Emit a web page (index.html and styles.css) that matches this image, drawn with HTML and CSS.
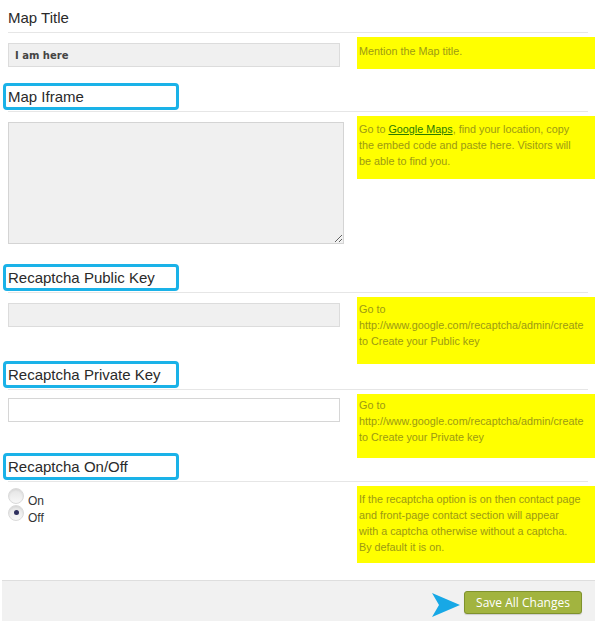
FILE: index.html
```html
<!DOCTYPE html>
<html>
<head>
    <meta charset="UTF-8">
    <title>Contact Options</title>
    <link rel="stylesheet" href="styles.css">
</head>
<body>
    <div class="options">
        <div class="section">
            <div class="section-head">
                <div class="heading">Map Title</div>
            </div>
            <div class="row row-title">
                <div class="field">
                    <input type="text" class="text-input input-muted input-value" value="I am here">
                </div>
                <div class="note note-title">Mention the Map title.</div>
            </div>
        </div>

        <div class="section">
            <div class="section-head">
                <div class="heading heading-marked">Map Iframe</div>
            </div>
            <div class="row row-iframe">
                <div class="field">
                    <textarea class="text-area"></textarea>
                </div>
                <div class="note note-iframe">Go to <a href="#" class="note-link">Google Maps</a>, find your location, copy<br>the embed code and paste here. Visitors will<br>be able to find you.</div>
            </div>
        </div>

        <div class="section">
            <div class="section-head">
                <div class="heading heading-marked">Recaptcha Public Key</div>
            </div>
            <div class="row row-public">
                <div class="field">
                    <input type="text" class="text-input input-muted">
                </div>
                <div class="note note-public">Go to<br>http://www.google.com/recaptcha/admin/create<br>to Create your Public key</div>
            </div>
        </div>

        <div class="section">
            <div class="section-head">
                <div class="heading heading-marked">Recaptcha Private Key</div>
            </div>
            <div class="row row-private">
                <div class="field field-tight">
                    <input type="text" class="text-input">
                </div>
                <div class="note note-private">Go to<br>http://www.google.com/recaptcha/admin/create<br>to Create your Private key</div>
            </div>
        </div>

        <div class="section">
            <div class="section-head">
                <div class="heading heading-marked">Recaptcha On/Off</div>
            </div>
            <div class="row row-toggle">
                <div class="field field-radios">
                    <label class="radio-line"><input type="radio" name="captcha" class="radio"><span>On</span></label>
                    <label class="radio-line"><input type="radio" name="captcha" class="radio" checked><span>Off</span></label>
                </div>
                <div class="note note-toggle">If the recaptcha option is on then contact page<br>and front-page contact section will appear<br>with a captcha otherwise without a captcha.<br>By default it is on.</div>
            </div>
        </div>
    </div>

    <div class="footer">
        <svg class="pointer" width="28" height="24" viewBox="0 0 28 24">
            <path d="M0 0 L28 12 L0 24 L7 12 Z" fill="#17a8e6"/>
        </svg>
        <button class="btn-save">Save All Changes</button>
    </div>
</body>
</html>
```

FILE: styles.css
```css
body {
    margin: 0;
    padding: 4px 0 0 0;
    font-family: 'Liberation Sans', Arial, sans-serif;
    color: #222;
    background: #fff;
}

.section-head {
    margin: 0 7px 0 8px;
    padding-bottom: 1px;
    border-bottom: 1px solid #e6e6e6;
}

.heading {
    margin-left: -5px;
    width: 176px;
    height: 27px;
    box-sizing: border-box;
    border: 3px solid transparent;
    border-radius: 4px;
    padding-left: 2px;
    font-size: 15px;
    line-height: 21px;
    color: #2a2a2a;
}

.heading-marked {
    border-color: #1ab2e8;
}

.row {
    display: grid;
    grid-template-columns: 349px 1fr;
    padding: 4px 0 0 8px;
    box-sizing: border-box;
}

.row-title { height: 50px; }
.row-iframe { height: 152px; }
.row-public { height: 68px; }
.row-private { height: 63px; }
.row-toggle { height: 98px; }

.field {
    padding-top: 6px;
}

.field-tight {
    padding-top: 4px;
}

.text-input {
    display: block;
    width: 332px;
    height: 24px;
    box-sizing: border-box;
    margin: 0;
    border: 1px solid #d6d6d6;
    background: #fff;
    padding: 0 6px;
}

.input-muted {
    background: #f0f0f0;
    border-color: #dcdcdc;
}

.input-value {
    font-family: 'DejaVu Sans', sans-serif;
    font-size: 10px;
    font-weight: bold;
    color: #444;
}

.text-area {
    display: block;
    width: 336px;
    height: 122px;
    box-sizing: border-box;
    margin: 0;
    border: 1px solid #d4d4d4;
    background: #f0f0f0;
}

.note {
    background: #ffff00;
    color: #9c9a14;
    font-size: 10.8px;
    line-height: 16px;
    padding: 5px 0 0 2px;
    box-sizing: border-box;
    white-space: nowrap;
}

.note-title { height: 32px; padding-top: 6px; }
.note-iframe { height: 63px; }
.note-public { height: 67px; padding-top: 4px; }
.note-private { height: 64px; padding-top: 3px; }
.note-toggle { height: 77px; }

.note-link {
    color: #2a7a00;
    text-decoration: underline;
}

.field-radios {
    padding-top: 2px;
}

.radio-line {
    display: flex;
    align-items: flex-end;
    height: 17px;
    gap: 4px;
    font-size: 12px;
    color: #333;
}

.radio-line span {
    line-height: 13px;
    margin-bottom: -3px;
}

.radio {
    -webkit-appearance: none;
    appearance: none;
    width: 16px;
    height: 16px;
    margin: 0 0 1px 0;
    border-radius: 50%;
    border: 1px solid #dadada;
    background: linear-gradient(#e4e4e4, #f8f8f8);
    box-shadow: inset 0 1px 2px rgba(0, 0, 0, 0.08);
    position: relative;
}

.radio:checked::after {
    content: '';
    position: absolute;
    left: 5px;
    top: 4px;
    width: 5px;
    height: 5px;
    border-radius: 50%;
    background: #2e2f5e;
}

.footer {
    margin-left: 2px;
    height: 41px;
    box-sizing: border-box;
    background: #f1f1f1;
    border-top: 1px solid #dedede;
    display: flex;
    justify-content: flex-end;
    align-items: center;
    padding: 3px 13px 0 0;
    gap: 4px;
}

.pointer {
    display: block;
    margin-top: 4px;
}

.btn-save {
    width: 118px;
    height: 23px;
    box-sizing: border-box;
    background: #a2b43f;
    border: 1px solid #7f922c;
    border-radius: 3px;
    color: #fff;
    font-family: 'Open Sans', sans-serif;
    font-size: 12px;
    padding: 0;
    box-shadow: 0 1px 1px rgba(0, 0, 0, 0.15);
}
```
